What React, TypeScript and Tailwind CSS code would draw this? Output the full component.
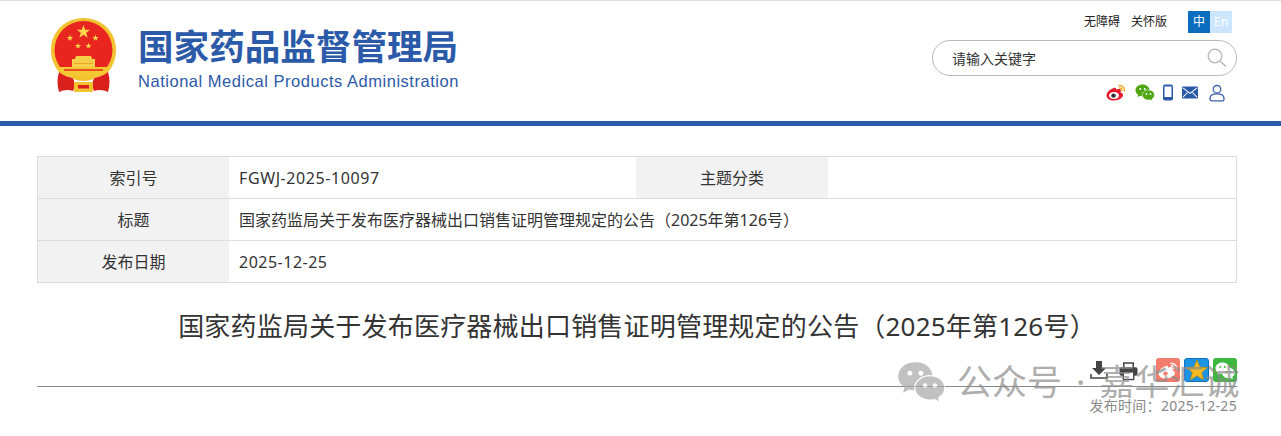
const cjk = "font-['Noto_Sans','Noto_Sans_CJK_SC',sans-serif]"

function Emblem() {
    const star = (cx: number, cy: number, r: number) => {
        const pts = []
        for (let i = 0; i < 10; i++) {
            const a = (Math.PI / 5) * i - Math.PI / 2
            const rad = i % 2 === 0 ? r : r * 0.4
            pts.push(`${cx + rad * Math.cos(a)},${cy + rad * Math.sin(a)}`)
        }
        return <polygon points={pts.join(" ")} fill="#fbd84a" />
    }
    return (
        <svg width="68" height="76" viewBox="0 0 68 76">
            {/* ring */}
            <path d="M33.500 1C52 1 66 15 66 33c0 10-4 18-10 24H11C5 51 1 43 1 33 1 15 15 1 33.500 1z" fill="#f3c22f" />
            <circle cx="33.500" cy="33" r="29" fill="#e8261f" />
            {star(33.500, 15, 7)}
            {star(20, 21, 3.4)}
            {star(45.500, 21, 3.4)}
            {star(28, 29, 3.2)}
            {star(38.500, 29, 3.2)}
            {/* gate */}
            <path d="M26 39h15l1 3h3v8H22v-8h3z" fill="#f6cf4a" />
            <rect x="24" y="46" width="19" height="1" fill="#e9a92a" />
            {/* band */}
            <path d="M7 50h53l-3 7c-6 3-14 4-23.500 4S16 60 10 57z" fill="#f5c733" />
            <path d="M14 53h39" stroke="#e8261f" strokeWidth="1.400" />
            {/* drapes */}
            <path d="M9 55c3 3 9 5 14 6 2 4 2 9 0 13-5-2-10-1-14 1-2-7-2-14 0-20z" fill="#d9201d" />
            <path d="M58 55c-3 3-9 5-14 6-2 4-2 9 0 13 5-2 10-1 14 1 2-7 2-14 0-20z" fill="#d9201d" />
            <path d="M23 57c3 2 6 3 10.500 3s8-1 10.500-3l1 4c-3 2-7 3-11.500 3S25 63 22 61z" fill="#f3c22f" />
            <rect x="24" y="65" width="19" height="10" fill="#f3c22f" />
            <rect x="28" y="68" width="11" height="3.500" fill="#d9201d" />
        </svg>
    )
}

function WechatIcon({ a, b, dot, size }: { a: string; b: string; dot: string; size: number }) {
    return (
        <svg width={size} height={size * 0.85} viewBox="0 0 40 34">
            <path d="M15 1C7 1 1 6 1 12.500c0 3.700 2 6.800 5 8.900L5 26l5-2.700c1.600.5 3.300.7 5 .7 8 0 14-5 14-11.500S23 1 15 1z" fill={a} />
            <circle cx="10.500" cy="10" r="2" fill={dot} />
            <circle cx="19.500" cy="10" r="2" fill={dot} />
            <path d="M27 12c-7 0-12.500 4.500-12.500 10S20 32 27 32c1.300 0 2.600-.2 3.800-.5L35 34l-1-4c3-1.800 5-4.600 5-8 0-5.500-5-10-12-10z" fill={b} stroke="#fff" strokeWidth="1" />
            <circle cx="23" cy="20" r="1.800" fill={dot} />
            <circle cx="31" cy="20" r="1.800" fill={dot} />
        </svg>
    )
}

function WeiboIcon({ body, arc, eye }: { body: string; arc: string; eye: string }) {
    return (
        <svg width="20" height="17" viewBox="0 0 20 17">
            <path d="M8 4C4 5 .5 8.500.5 11.500.5 14.500 4 16.500 8 16.500c5 0 9-3 9-5.500 0-1.800-1.700-2.300-2.500-2.600.6-1.500.5-2.700-.5-3.200-1.300-.5-3.500.3-4 .5.300-1.200 0-2.800-2-1.700z" fill={body} />
            <ellipse cx="8" cy="11.500" rx="5" ry="3.600" fill="#fff" />
            <ellipse cx="7.500" cy="11.700" rx="2.300" ry="2.100" fill={eye} />
            <path d="M13 1.500c3-.5 6 2 5.500 5.500M13.500 4c1.500-.2 2.700 1 2.500 2.500" fill="none" stroke={arc} strokeWidth="1.500" strokeLinecap="round" />
        </svg>
    )
}

function Row({ label, children }: { label: string; children: React.ReactNode }) {
    return (
        <div className="flex h-[42px] items-center border-b border-[#dddddd] last:h-[41px] last:border-b-0">
            <div className="flex h-full w-[191px] items-center justify-center bg-[#f2f2f2] text-[#333333]">{label}</div>
            {children}
        </div>
    )
}

export default function App() {
    return (
        <div className={`relative h-[436px] w-[1281px] overflow-hidden bg-white ${cjk}`}>
            {/* Header */}
            <header className="flex h-[126px] justify-between border-t border-[#e0e0e0] border-b-[5px] border-b-[#2b5aa8] pl-[50px] pr-[44px]">
                <div className="flex items-start gap-[20px] pt-[16px]">
                    <Emblem />
                    <div className="w-[322px] pt-[8px] text-[#2b5aa8]">
                        <div className="h-[42px] text-[35.600px] font-bold leading-[42px] whitespace-nowrap">国家药品监督管理局</div>
                        <div className="mt-[4px] font-['Liberation_Sans',sans-serif] text-[16.500px] leading-[20px] tracking-[0.525px] whitespace-nowrap">National Medical Products Administration</div>
                    </div>
                </div>
                <div className="flex w-[305px] flex-col items-end">
                    <div className="mt-[10px] flex h-[22px] items-center pr-[5px] text-[12px] text-[#222222]">
                        <span>无障碍</span>
                        <span className="ml-[11px]">关怀版</span>
                        <div className="ml-[21px] flex h-[22px] text-[12px] leading-[22px]">
                            <span className="w-[22px] bg-[#0b6dbd] text-center text-white">中</span>
                            <span className="w-[22px] bg-[#cbe6fd] text-center text-white">En</span>
                        </div>
                    </div>
                    <div className="mt-[7px] flex h-[36px] w-[305px] items-center justify-between rounded-full border border-[#b9b9b9] pl-[19px] pr-[9px]">
                        <span className="text-[14px] text-[#333333]">请输入关键字</span>
                        <svg width="20" height="20" viewBox="0 0 20 20" fill="none" stroke="#b8b8b8" strokeWidth="1.300">
                            <circle cx="8" cy="8" r="6.800" />
                            <path d="M13 13l6 5.500" strokeWidth="1.600" />
                        </svg>
                    </div>
                    <div className="mt-[7px] flex h-[19px] items-center pr-[12px]">
                        <WeiboIcon body="#e6162d" arc="#f5a623" eye="#333333" />
                        <span className="ml-[9px] flex">
                            <WechatIcon a="#4ea610" b="#4ea610" dot="#ffffff" size={20} />
                        </span>
                        <svg width="10" height="17" viewBox="0 0 10 17" className="ml-[8px]">
                            <rect x="0" y="0.500" width="10" height="16" rx="2" fill="#2b5aa8" />
                            <rect x="1.500" y="2.500" width="7" height="10.500" fill="#fff" />
                        </svg>
                        <svg width="16" height="13" viewBox="0 0 17 13" className="ml-[9px]">
                            <rect width="17" height="13" rx="1" fill="#2b5aa8" />
                            <path d="M1 1.500l7.500 6 7.500-6M1 11.500l5-5M16 11.500l-5-5" fill="none" stroke="#fff" strokeWidth="1.100" />
                        </svg>
                        <svg width="16" height="18" viewBox="0 0 17 18" fill="none" stroke="#3f62ad" strokeWidth="1.400" className="ml-[11px]">
                            <circle cx="8.500" cy="5" r="4" />
                            <path d="M1 15c0-3.500 3-5 7.500-5s7.500 1.500 7.500 5c0 1.500-1 2.300-2 2.300H3c-1 0-2-.8-2-2.300z" />
                        </svg>
                    </div>
                </div>
            </header>

            <main className="pl-[37px] pr-[44px] pt-[30px]">
                {/* Info table */}
                <div className="w-[1200px] border border-[#dddddd] text-[16px] text-[#333333]">
                    <Row label="索引号">
                        <div className="w-[407px] pl-[10px] tracking-[0.600px]">FGWJ-2025-10097</div>
                        <div className="flex h-full w-[192px] items-center justify-center bg-[#f2f2f2]">主题分类</div>
                    </Row>
                    <Row label="标题">
                        <div className="pl-[10px]">国家药监局关于发布医疗器械出口销售证明管理规定的公告（2025年第126号）</div>
                    </Row>
                    <Row label="发布日期">
                        <div className="pl-[10px] tracking-[0.500px]">2025-12-25</div>
                    </Row>
                </div>

                {/* Article head */}
                <h1 className="mt-[23px] h-[40px] text-center text-[26px] leading-[40px] tracking-[0.200px] text-[#333333]">国家药监局关于发布医疗器械出口销售证明管理规定的公告（2025年第126号）</h1>
                <div className="mt-[12px] flex h-[29px] items-start justify-end border-b border-[#888888]">
                    <svg width="18" height="19" viewBox="0 0 18 19" className="mr-[11px] mt-[3px]">
                        <path d="M6 0h6v7h4l-7 7-7-7h4z" fill="#444444" />
                        <path d="M1 13v4h16v-4" fill="none" stroke="#444444" strokeWidth="1.600" />
                    </svg>
                    <svg width="19" height="20" viewBox="0 0 20 20" className="mr-[18px] mt-[3px]">
                        <path d="M5 6V1.500h10V6" fill="none" stroke="#444444" strokeWidth="1.600" />
                        <rect x="0.500" y="6" width="19" height="9" rx="2" fill="#444444" />
                        <rect x="4.500" y="11" width="11" height="8" fill="#fff" stroke="#444444" strokeWidth="1.400" />
                    </svg>
                    <span className="flex h-[24px] w-[24px] items-center justify-center rounded-[3px] bg-[#f47c6c]">
                        <WeiboIcon body="#ffffff" arc="#ffffff" eye="#f47c6c" />
                    </span>
                    <span className="ml-[4px] flex h-[24px] w-[25px] items-center justify-center rounded-[3px] border border-[#0f6fc0] bg-[#1d93e3]">
                        <svg width="22" height="22" viewBox="0 0 20 20">
                            <polygon points="10,1 12.700,7.200 19.500,7.800 14.300,12.200 16,19 10,15.300 4,19 5.700,12.200 .5,7.800 7.300,7.200" fill="#f5b921" stroke="#b8860b" strokeWidth="0.600" />
                        </svg>
                    </span>
                    <span className="ml-[4px] flex h-[24px] w-[24px] items-center justify-center rounded-[3px] bg-[#3cb93c]">
                        <WechatIcon a="#ffffff" b="#ffffff" dot="#3cb93c" size={20} />
                    </span>
                </div>
                <div className="mt-[10px] text-right text-[14px] leading-[18px] tracking-[0.300px] text-[#888888]">发布时间：2025-12-25</div>
            </main>

            {/* WeChat forwarding watermark */}
            <div className="pointer-events-none absolute left-[897px] top-[360px] flex items-center gap-[11px] text-[#8c8c8c] opacity-70">
                <WechatIcon a="#a8a8a8" b="#a8a8a8" dot="#ffffff" size={49} />
                <span className="text-[35px] leading-[44px] whitespace-nowrap [word-spacing:5px]">公众号 · 嘉华汇诚</span>
            </div>
        </div>
    )
}
